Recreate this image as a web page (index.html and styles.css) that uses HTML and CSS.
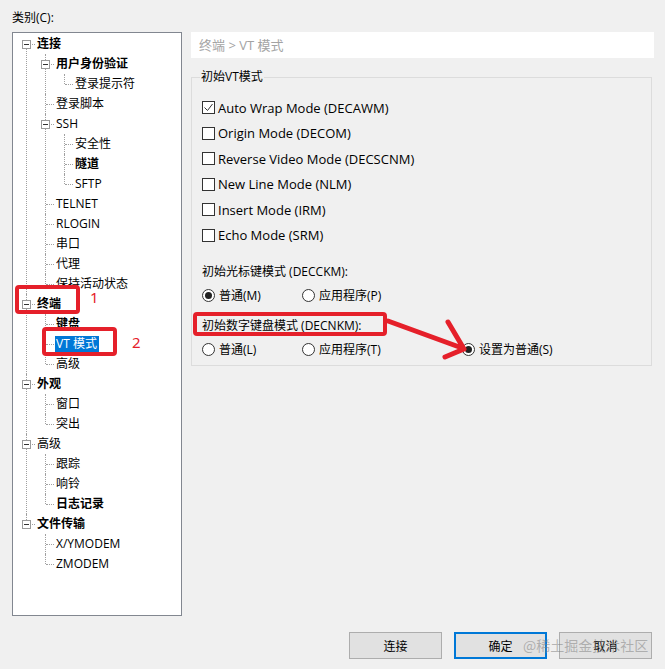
FILE: index.html
```html
<!DOCTYPE html>
<html lang="zh-CN">
<head>
    <meta charset="UTF-8">
    <title>会话选项</title>
    <link rel="stylesheet" href="styles.css">
</head>
<body>
    <div class="dialog">
        <div class="main">
            <div class="side">
                <div class="side-title">类别(C):</div>
                <div class="tree-box">
                    <ul class="tree">
                        <li>
                            <div class="node"><span class="gutter"><svg class="exp" width="9" height="9"><rect x="0.5" y="0.5" width="8" height="8" fill="#fff" stroke="#9a9a9a"/><path d="M2 4.5h5" stroke="#333"/></svg></span><span class="label bold">连接</span></div>
                            <ul>
                                <li>
                                    <div class="node"><span class="gutter"><svg class="exp" width="9" height="9"><rect x="0.5" y="0.5" width="8" height="8" fill="#fff" stroke="#9a9a9a"/><path d="M2 4.5h5" stroke="#333"/></svg></span><span class="label bold">用户身份验证</span></div>
                                    <ul>
                                        <li><div class="node"><span class="gutter"></span><span class="label">登录提示符</span></div></li>
                                    </ul>
                                </li>
                                <li><div class="node"><span class="gutter"></span><span class="label">登录脚本</span></div></li>
                                <li>
                                    <div class="node"><span class="gutter"><svg class="exp" width="9" height="9"><rect x="0.5" y="0.5" width="8" height="8" fill="#fff" stroke="#9a9a9a"/><path d="M2 4.5h5" stroke="#333"/></svg></span><span class="label">SSH</span></div>
                                    <ul>
                                        <li><div class="node"><span class="gutter"></span><span class="label">安全性</span></div></li>
                                        <li><div class="node"><span class="gutter"></span><span class="label bold">隧道</span></div></li>
                                        <li><div class="node"><span class="gutter"></span><span class="label">SFTP</span></div></li>
                                    </ul>
                                </li>
                                <li><div class="node"><span class="gutter"></span><span class="label">TELNET</span></div></li>
                                <li><div class="node"><span class="gutter"></span><span class="label">RLOGIN</span></div></li>
                                <li><div class="node"><span class="gutter"></span><span class="label">串口</span></div></li>
                                <li><div class="node"><span class="gutter"></span><span class="label">代理</span></div></li>
                                <li><div class="node"><span class="gutter"></span><span class="label">保持活动状态</span></div></li>
                            </ul>
                        </li>
                        <li>
                            <div class="node"><span class="gutter"><svg class="exp" width="9" height="9"><rect x="0.5" y="0.5" width="8" height="8" fill="#fff" stroke="#9a9a9a"/><path d="M2 4.5h5" stroke="#333"/></svg></span><span class="label bold">终端</span></div>
                            <ul>
                                <li><div class="node"><span class="gutter"></span><span class="label bold">键盘</span></div></li>
                                <li><div class="node"><span class="gutter"></span><span class="label sel">VT 模式</span></div></li>
                                <li><div class="node"><span class="gutter"></span><span class="label">高级</span></div></li>
                            </ul>
                        </li>
                        <li>
                            <div class="node"><span class="gutter"><svg class="exp" width="9" height="9"><rect x="0.5" y="0.5" width="8" height="8" fill="#fff" stroke="#9a9a9a"/><path d="M2 4.5h5" stroke="#333"/></svg></span><span class="label bold">外观</span></div>
                            <ul>
                                <li><div class="node"><span class="gutter"></span><span class="label">窗口</span></div></li>
                                <li><div class="node"><span class="gutter"></span><span class="label">突出</span></div></li>
                            </ul>
                        </li>
                        <li>
                            <div class="node"><span class="gutter"><svg class="exp" width="9" height="9"><rect x="0.5" y="0.5" width="8" height="8" fill="#fff" stroke="#9a9a9a"/><path d="M2 4.5h5" stroke="#333"/></svg></span><span class="label">高级</span></div>
                            <ul>
                                <li><div class="node"><span class="gutter"></span><span class="label">跟踪</span></div></li>
                                <li><div class="node"><span class="gutter"></span><span class="label">响铃</span></div></li>
                                <li><div class="node"><span class="gutter"></span><span class="label bold">日志记录</span></div></li>
                            </ul>
                        </li>
                        <li>
                            <div class="node"><span class="gutter"><svg class="exp" width="9" height="9"><rect x="0.5" y="0.5" width="8" height="8" fill="#fff" stroke="#9a9a9a"/><path d="M2 4.5h5" stroke="#333"/></svg></span><span class="label bold">文件传输</span></div>
                            <ul>
                                <li><div class="node"><span class="gutter"></span><span class="label">X/YMODEM</span></div></li>
                                <li><div class="node"><span class="gutter"></span><span class="label">ZMODEM</span></div></li>
                            </ul>
                        </li>
                    </ul>
                </div>
            </div>

            <div class="content">
                <div class="crumb">终端 &gt; VT 模式</div>
                <fieldset class="group">
                    <legend>初始VT模式</legend>
                    <div class="checks">
                        <div class="check">
                            <svg width="13" height="13"><rect x="0.5" y="0.5" width="12" height="12" fill="#fff" stroke="#333"/><path d="M2.5 6.5l3 3l5-6.5" fill="none" stroke="#333"/></svg>
                            <span>Auto Wrap Mode (DECAWM)</span>
                        </div>
                        <div class="check">
                            <svg width="13" height="13"><rect x="0.5" y="0.5" width="12" height="12" fill="#fff" stroke="#333"/></svg>
                            <span>Origin Mode (DECOM)</span>
                        </div>
                        <div class="check">
                            <svg width="13" height="13"><rect x="0.5" y="0.5" width="12" height="12" fill="#fff" stroke="#333"/></svg>
                            <span>Reverse Video Mode (DECSCNM)</span>
                        </div>
                        <div class="check">
                            <svg width="13" height="13"><rect x="0.5" y="0.5" width="12" height="12" fill="#fff" stroke="#333"/></svg>
                            <span>New Line Mode (NLM)</span>
                        </div>
                        <div class="check">
                            <svg width="13" height="13"><rect x="0.5" y="0.5" width="12" height="12" fill="#fff" stroke="#333"/></svg>
                            <span>Insert Mode (IRM)</span>
                        </div>
                        <div class="check">
                            <svg width="13" height="13"><rect x="0.5" y="0.5" width="12" height="12" fill="#fff" stroke="#333"/></svg>
                            <span>Echo Mode (SRM)</span>
                        </div>
                    </div>

                    <div class="sub-title first">初始光标键模式 (DECCKM):</div>
                    <div class="radios">
                        <div class="radio r1">
                            <svg width="13" height="13"><circle cx="6.5" cy="6.5" r="6" fill="#fff" stroke="#333"/><circle cx="6.5" cy="6.5" r="3.5" fill="#222"/></svg>
                            <span>普通(M)</span>
                        </div>
                        <div class="radio r2">
                            <svg width="13" height="13"><circle cx="6.5" cy="6.5" r="6" fill="#fff" stroke="#333"/></svg>
                            <span>应用程序(P)</span>
                        </div>
                    </div>

                    <div class="sub-title">初始数字键盘模式 (DECNKM):</div>
                    <div class="radios">
                        <div class="radio r1">
                            <svg width="13" height="13"><circle cx="6.5" cy="6.5" r="6" fill="#fff" stroke="#333"/></svg>
                            <span>普通(L)</span>
                        </div>
                        <div class="radio r2">
                            <svg width="13" height="13"><circle cx="6.5" cy="6.5" r="6" fill="#fff" stroke="#333"/></svg>
                            <span>应用程序(T)</span>
                        </div>
                        <div class="radio">
                            <svg width="13" height="13"><circle cx="6.5" cy="6.5" r="6" fill="#fff" stroke="#333"/><circle cx="6.5" cy="6.5" r="3.5" fill="#222"/></svg>
                            <span>设置为普通(S)</span>
                        </div>
                    </div>
                </fieldset>
            </div>
        </div>

        <div class="buttons">
            <button class="btn">连接</button>
            <button class="btn default">确定</button>
            <button class="btn">取消</button>
        </div>
    </div>

    <!-- 标注 -->
    <svg class="marks" width="665" height="669">
        <rect x="17" y="287" width="61" height="25" rx="2" fill="none" stroke="#e5202a" stroke-width="4"/>
        <rect x="44" y="329" width="71" height="25" rx="2" fill="none" stroke="#e5202a" stroke-width="4"/>
        <rect x="195" y="314" width="190" height="20" rx="2" fill="none" stroke="#e5202a" stroke-width="4"/>
        <path d="M388 321L462 348M448 322L464 349L445 357" fill="none" stroke="#e5202a" stroke-width="5" stroke-linecap="round" stroke-linejoin="round"/>
    </svg>
    <span class="num num1">1</span>
    <span class="num num2">2</span>
    <span class="watermark">@稀土掘金技术社区</span>
</body>
</html>
```

FILE: styles.css
```css
body {
    margin: 0;
    background: #f0f0f0;
    font-family: 'Open Sans', 'Noto Sans CJK SC', sans-serif;
    font-size: 12px;
    color: #000;
    width: 665px;
    height: 669px;
    overflow: hidden;
    position: relative;
}
.dialog {
    padding: 10px 13px 0 12px;
}
.main {
    display: flex;
    gap: 9px;
}
.side {
    width: 170px;
    flex: none;
}
.side-title {
    height: 22px;
    line-height: 16px;
}
.tree-box {
    height: 581px;
    background: #fff;
    border: 1px solid #828790;
    padding-top: 1px;
    box-sizing: content-box;
}
.tree,
.tree ul {
    list-style: none;
    margin: 0;
    padding: 0;
}
.tree {
    padding-left: 4px;
}
.tree ul {
    padding-left: 19px;
}
.tree li {
    position: relative;
}
/* vertical dotted line */
.tree li::before {
    content: '';
    position: absolute;
    left: 9px;
    top: 0;
    bottom: 0;
    border-left: 1px dotted #a0a0a0;
}
.tree li:last-child::before {
    bottom: auto;
    height: 10px;
}
.tree > li:first-child::before {
    top: 10px;
}
.node {
    display: flex;
    align-items: center;
    height: 20px;
}
.gutter {
    position: relative;
    width: 19px;
    height: 20px;
    flex: none;
    display: flex;
    align-items: center;
    padding-left: 5px;
    box-sizing: border-box;
}
.gutter::before {
    content: '';
    position: absolute;
    left: 10px;
    top: 10px;
    width: 8px;
    border-top: 1px dotted #a0a0a0;
}
.exp {
    position: relative;
}
.label {
    line-height: 16px;
    padding: 0 2px 0 1px;
    white-space: nowrap;
}
.bold {
    font-weight: bold;
}
.label.sel {
    background: #0078d7;
    color: #fff;
}

.content {
    width: 461px;
    flex: none;
    padding-top: 22px;
}
.crumb {
    height: 26px;
    line-height: 26px;
    background: #fff;
    color: #a3a3a3;
    font-size: 13px;
    padding-left: 8px;
    margin-right: -2px;
}
.group {
    margin: 11px 0 0 0;
    padding: 0 10px 13px 10px;
    border: 1px solid #dcdcdc;
    height: 297px;
    box-sizing: border-box;
}
.group legend {
    padding: 0 1px;
    margin-left: -2px;
    line-height: 16px;
}
.checks {
    margin-top: 10px;
}
.check {
    display: flex;
    align-items: center;
    gap: 3px;
    height: 25.5px;
    font-size: 13px;
}
.check svg,
.radio svg {
    flex: none;
}
.sub-title {
    line-height: 16px;
    margin-top: 13px;
}
.sub-title.first {
    margin-top: 16px;
}
.radios {
    display: flex;
    height: 20px;
    margin-top: 5px;
}
.radio {
    display: flex;
    align-items: center;
    gap: 4px;
}
.radio.r1 {
    width: 100px;
}
.radio.r2 {
    width: 160px;
}

.buttons {
    display: flex;
    justify-content: flex-end;
    gap: 12px;
    margin-top: 16px;
}
.btn {
    width: 93px;
    height: 27px;
    background: #e1e1e1;
    border: 1px solid #adadad;
    font-family: 'Open Sans', 'Noto Sans CJK SC', sans-serif;
    font-size: 12px;
    color: #000;
    padding: 0;
}
.btn.default {
    border: 2px solid #0078d7;
}

.marks {
    position: absolute;
    left: 0;
    top: 0;
    pointer-events: none;
}
.num {
    position: absolute;
    color: #e5202a;
    font-family: 'Noto Sans', sans-serif;
    font-size: 15px;
    line-height: 15px;
}
.num1 {
    left: 90px;
    top: 290px;
}
.num2 {
    left: 132px;
    top: 335px;
}
.watermark {
    position: absolute;
    left: 523px;
    top: 636px;
    font-family: 'Noto Sans CJK SC', sans-serif;
    font-size: 14px;
    line-height: 18px;
    color: rgba(130, 130, 130, 0.55);
    white-space: nowrap;
}
```
